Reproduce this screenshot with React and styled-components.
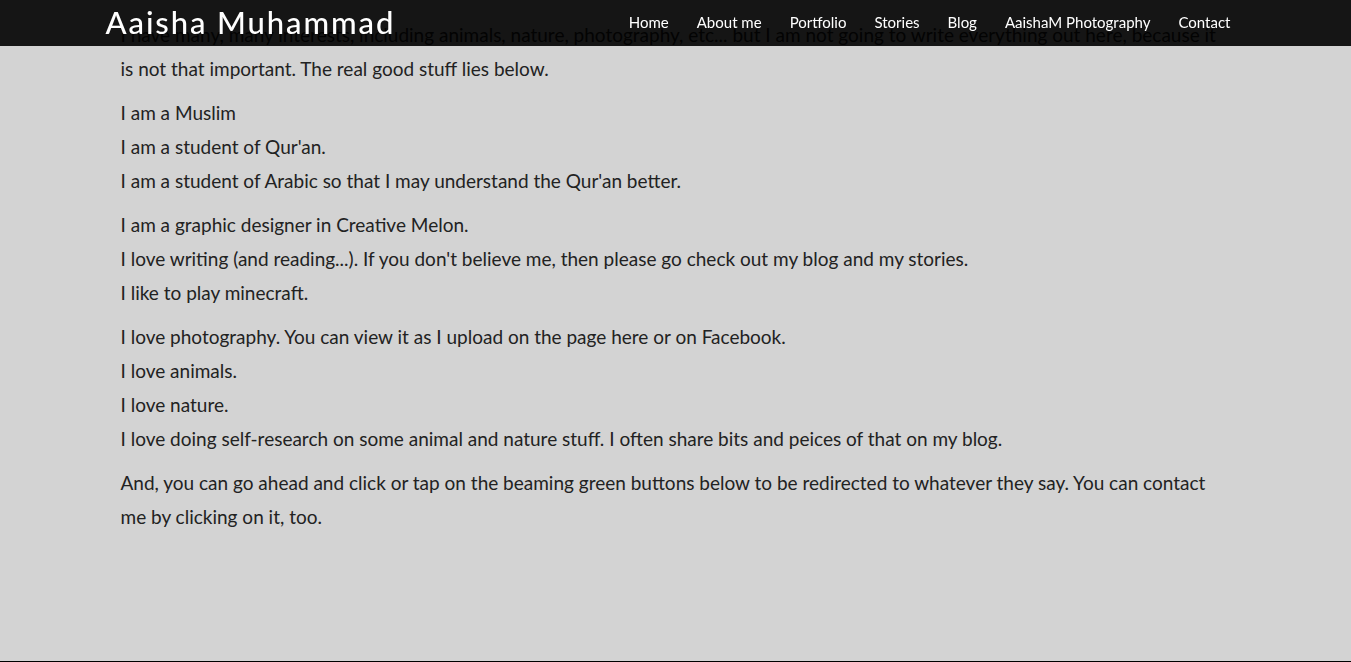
import React from "react";
import styled, { createGlobalStyle } from "styled-components";

const Global = createGlobalStyle`
  html, body { margin: 0; padding: 0; }
  body {
    background: #d3d3d3;
    font-family: "Lato", "Open Sans", sans-serif;
    color: #222;
  }
  * { box-sizing: border-box; }
`;

const Page = styled.div`
  height: 662px;
  overflow: hidden;
  border-bottom: 1px solid #000;
`;

const NavBar = styled.nav`
  position: fixed;
  top: 0;
  left: 0;
  right: 0;
  height: 46px;
  background: rgba(0, 0, 0, 0.9);
  z-index: 10;
`;

const NavInner = styled.div`
  width: 1170px;
  margin: 0 auto;
  height: 100%;
  display: flex;
  align-items: center;
  justify-content: space-between;
  padding: 0 16px 0 15px;
`;

const Brand = styled.a`
  font-family: "Lato", sans-serif;
  font-size: 31px;
  font-weight: 500;
  letter-spacing: 1.9px;
  color: #fff;
  text-decoration: none;
  line-height: 46px;
  margin-top: -2px;
`;

const Links = styled.ul`
  list-style: none;
  display: flex;
  margin: 0;
  padding: 0;
  height: 100%;
  align-items: center;
`;

const LinkItem = styled.li`
  padding: 0 14px;
  font-family: "Lato", sans-serif;
  font-size: 15px;
  color: #fff;
  margin-top: -2px;
`;

const Content = styled.main`
  width: 1170px;
  margin: 0 auto;
  padding: 18px 30px 0;
`;

const Para = styled.p`
  margin: 0 0 10px;
  font-size: 19px;
  line-height: 34px;
`;

const links = ["Home", "About me", "Portfolio", "Stories", "Blog", "AaishaM Photography", "Contact"];

export default function App() {
  return (
    <Page>
      <Global />
      <NavBar>
        <NavInner>
          <Brand>Aaisha Muhammad</Brand>
          <Links>
            {links.map((l) => (
              <LinkItem key={l}>{l}</LinkItem>
            ))}
          </Links>
        </NavInner>
      </NavBar>
      <Content>
        <Para>
          I have many, many interests, including animals, nature, photography, etc... but I am not going to write everything out here, because it is not that important. The real good stuff lies below.
        </Para>
        <Para>
          I am a Muslim<br />
          I am a student of Qur'an.<br />
          I am a student of Arabic so that I may understand the Qur'an better.
        </Para>
        <Para>
          I am a graphic designer in Creative Melon.<br />
          I love writing (and reading...). If you don't believe me, then please go check out my blog and my stories.<br />
          I like to play minecraft.
        </Para>
        <Para>
          I love photography. You can view it as I upload on the page here or on Facebook.<br />
          I love animals.<br />
          I love nature.<br />
          I love doing self-research on some animal and nature stuff. I often share bits and peices of that on my blog.
        </Para>
        <Para>
          And, you can go ahead and click or tap on the beaming green buttons below to be redirected to whatever they say. You can contact me by clicking on it, too.
        </Para>
      </Content>
    </Page>
  );
}
